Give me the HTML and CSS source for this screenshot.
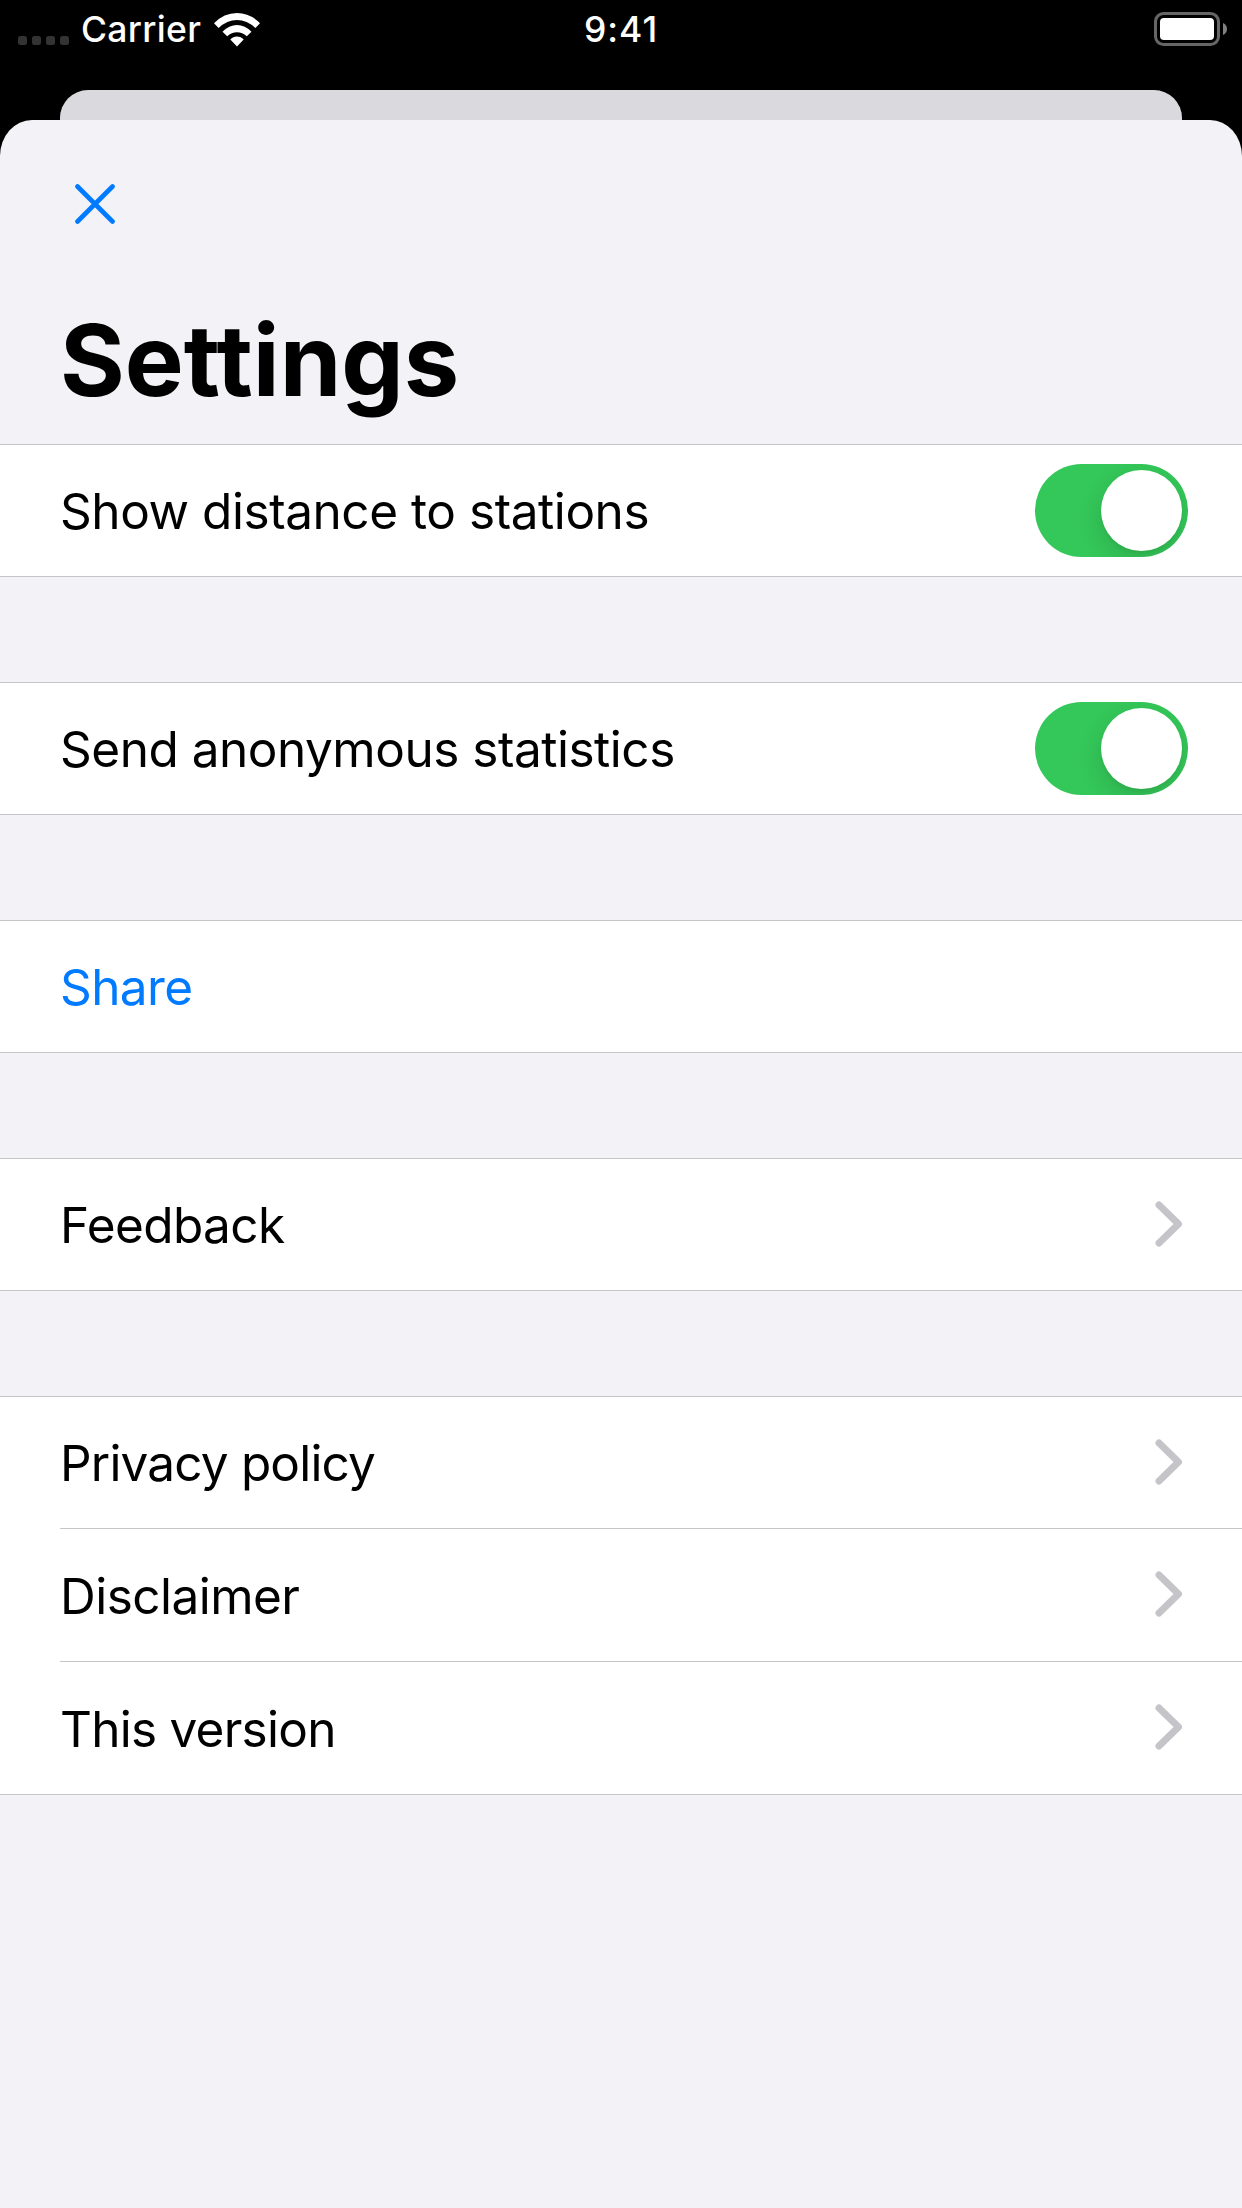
FILE: index.html
```html
<!DOCTYPE html>
<html lang="en">
<head>
<meta charset="utf-8">
<title>Settings</title>
<link rel="stylesheet" href="styles.css">
</head>
<body>
<header class="status">
  <div class="status-left">
    <span class="signal"><i></i><i></i><i></i><i></i></span>
    <span class="carrier">Carrier</span>
    <svg class="wifi" width="46" height="34" viewBox="0 0 46 34" fill="#fff">
      <path d="M0 10.200Q10 0 23 0t23 10.200l-4.600 4.800Q33 7 23 7T4.600 15z"/>
      <path d="M8.500 18.800Q15 12 23 12t14.500 6.800l-4.700 4.500Q28.500 19.200 23 19.200t-9.800 4.100z"/>
      <path d="M16.300 26.600Q19 23.500 23 23.500t6.700 3.100L23 33.400z"/>
    </svg>
  </div>
  <span class="time">9:41</span>
  <svg class="battery" width="74" height="34" viewBox="0 0 74 34">
    <rect x="1.500" y="1.500" width="63" height="31" rx="8" fill="none" stroke="#666" stroke-width="3"/>
    <rect x="6" y="6" width="54" height="22" rx="4" fill="#fff"/>
    <path d="M69 11q4 1.800 4 6t-4 6z" fill="#808080"/>
  </svg>
</header>
<div class="backdrop"></div>
<main class="sheet">
  <button class="close" aria-label="Close">
    <svg width="40" height="40" viewBox="0 0 40 40" fill="none" stroke="#007aff" stroke-width="4.600" stroke-linecap="round"><path d="M2.500 2.500l35 35m0-35l-35 35"/></svg>
  </button>
  <h1 class="title">Settings</h1>
  <div class="groups">
    <section class="group"><div class="row"><span class="label distance">Show distance to stations</span><span class="switch"></span></div></section>
    <section class="group"><div class="row"><span class="label statistics">Send anonymous statistics</span><span class="switch"></span></div></section>
    <section class="group"><div class="row"><span class="label share">Share</span></div></section>
    <section class="group"><div class="row"><span class="label feedback">Feedback</span><svg class="chevron" viewBox="0 0 28 46"><path d="M4 4l19.500 19L4 42"/></svg></div></section>
    <section class="group">
      <div class="row"><span class="label privacy">Privacy policy</span><svg class="chevron" viewBox="0 0 28 46"><path d="M4 4l19.500 19L4 42"/></svg></div>
      <div class="row"><span class="label disclaimer">Disclaimer</span><svg class="chevron" viewBox="0 0 28 46"><path d="M4 4l19.500 19L4 42"/></svg></div>
      <div class="row"><span class="label version">This version</span><svg class="chevron" viewBox="0 0 28 46"><path d="M4 4l19.500 19L4 42"/></svg></div>
    </section>
  </div>
</main>
</body>
</html>
```
FILE: styles.css
```css
* { box-sizing: border-box; }
body {
  margin: 0;
  height: 2208px;
  display: flex;
  flex-direction: column;
  background: #000;
  color: #000;
  font-family: Inter, "Liberation Sans", sans-serif;
  overflow: hidden;
}
.status {
  height: 90px;
  flex: none;
  display: grid;
  grid-template-columns: 1fr auto 1fr;
  align-items: start;
  padding: 0 14px 0 18px;
  color: #fff;
  font-size: 35.5px;
  font-weight: 450;
  line-height: 60px;
}
.status-left { display: flex; align-items: flex-start; }
.signal { display: flex; gap: 5px; padding-top: 36px; }
.signal i { width: 9px; height: 9px; border-radius: 2.5px; background: #333; }
.carrier { width: 119px; margin-left: 12px; letter-spacing: .3px; }
.time { letter-spacing: 1px; margin-right: 4px; }
.wifi { flex: none; margin: 13px 0 0 14px; }
.battery { justify-self: end; margin-top: 12px; }
.backdrop {
  flex: none;
  height: 30px;
  margin: 0 60px;
  background: #d9d9de;
  border-radius: 28px 28px 0 0;
}
.sheet {
  flex: 1;
  background: #f2f2f7;
  border-radius: 32px 32px 0 0 / 36px 36px 0 0;
}
.close {
  display: block;
  width: 40px;
  height: 40px;
  margin: 64px 0 0 75px;
  padding: 0;
  border: 0;
  background: none;
}
.close svg { display: block; }
.title {
  margin: 0;
  height: 220px;
  padding: 76px 0 0 60px;
  font-size: 99px;
  font-weight: 700;
  line-height: 120px;
}
.groups { display: flex; flex-direction: column; gap: 105px; }
.group {
  background: #fff;
  border-top: 1px solid #c6c6c8;
  border-bottom: 1px solid #c6c6c8;
}
.row {
  height: 131px;
  display: flex;
  align-items: center;
  justify-content: space-between;
  margin-left: 60px;
  padding-right: 54px;
  font-size: 49.5px;
  line-height: 60px;
}
.row + .row { height: 133px; border-top: 1px solid #c6c6c8; }
.label { padding-top: 1px; }
.row + .row .label { padding-top: 2px; }
.distance { letter-spacing: -.44px; }
.statistics { letter-spacing: -.48px; }
.share { color: #007aff; letter-spacing: -.6px; }
.feedback { letter-spacing: -.6px; }
.privacy { letter-spacing: -.82px; }
.disclaimer { letter-spacing: -.53px; }
.version { letter-spacing: -.75px; }
.switch {
  display: flex;
  justify-content: flex-end;
  width: 153px;
  height: 93px;
  padding: 6px;
  border-radius: 47px;
  background: #34c759;
  overflow: hidden;
}
.switch::before {
  content: "";
  width: 81px;
  height: 81px;
  border-radius: 50%;
  background: #fff;
  box-shadow: 0 9px 24px rgba(0, 0, 0, .13), 0 3px 3px rgba(0, 0, 0, .04);
}
.chevron {
  width: 28px;
  height: 46px;
  margin: 0 5px 2px 0;
  fill: none;
  stroke: #c5c5c9;
  stroke-width: 7;
  stroke-linecap: round;
  stroke-linejoin: round;
}
```
